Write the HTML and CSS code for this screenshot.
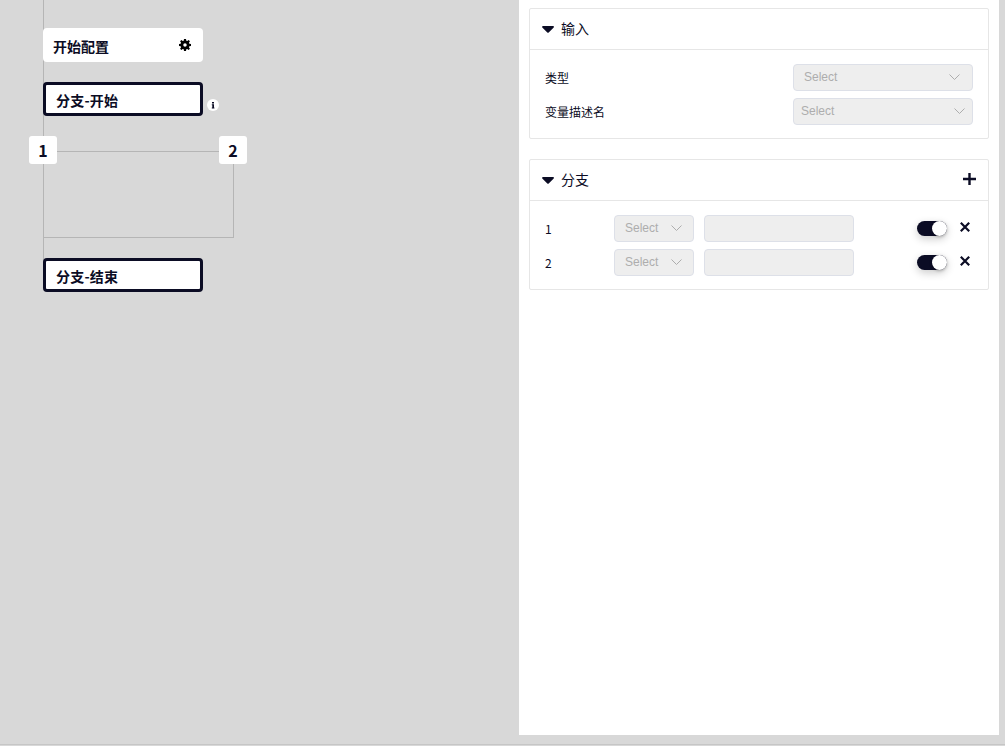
FILE: index.html
```html
<!DOCTYPE html>
<html lang="zh-CN">
<head>
  <meta charset="UTF-8" />
  <title>分支配置</title>
  <link rel="stylesheet" href="styles.css">
</head>
<body>

<div class="page">
  <div class="canvas">
    <div class="line line-main"></div>
    <div class="branch-box"></div>

    <div class="node node-start">
      <span>开始配置</span>
      <svg class="gear" viewBox="0 0 24 24" width="12" height="12"><path fill-rule="evenodd" d="M10 0h4l.6 3.300 1.900.8 2.800-1.900 2.500 2.500-1.900 2.800.8 1.900 3.300.6v4l-3.300.6-.8 1.900 1.900 2.800-2.500 2.500-2.800-1.900-1.900.8L14 24h-4l-.6-3.300-1.900-.8-2.800 1.900-2.500-2.500 1.900-2.800-.8-1.900L0 14v-4l3.300-.6.8-1.900-1.900-2.800 2.500-2.500 2.800 1.900 1.900-.8zM12 8.500a3.500 3.500 0 1 0 0 7 3.500 3.500 0 0 0 0-7z"/></svg>
    </div>

    <div class="node node-branch node-open">分支-开始</div>
    <svg class="info" viewBox="0 0 12 12" width="12" height="12"><circle cx="6" cy="6" r="6" fill="#fff"/><path d="M5 3h2v1.500H5zM4.800 5.300H7v3.200h.4V9.500H4.800V8.500h.5V6.300h-.5z" fill="#0b0c24"/></svg>

    <div class="tag tag-left">1</div>
    <div class="tag tag-right">2</div>

    <div class="node node-branch node-close">分支-结束</div>
  </div>

  <div class="panel">
    <section class="card">
      <div class="card-head">
        <svg class="caret" viewBox="0 0 12 7" width="12" height="7"><path d="M1 0h10c.8 0 1.200.9.700 1.500L6.700 6.400c-.4.4-1 .4-1.400 0L.3 1.500C-.2.900.2 0 1 0z" fill="#0b0c24"/></svg>
        <h2>输入</h2>
      </div>
      <div class="card-body">
        <div class="field">
          <label>类型</label>
          <div class="select select-wide select-first"><span>Select</span><svg class="chev" viewBox="0 0 11 6" width="11" height="6"><path d="M.5.5 5.500 5.500 10.500.5" fill="none" stroke="#adadad"/></svg></div>
        </div>
        <div class="field">
          <label>变量描述名</label>
          <div class="select select-wide"><span>Select</span><svg class="chev" viewBox="0 0 11 6" width="11" height="6"><path d="M.5.5 5.500 5.500 10.500.5" fill="none" stroke="#adadad"/></svg></div>
        </div>
      </div>
    </section>

    <section class="card">
      <div class="card-head">
        <svg class="caret" viewBox="0 0 12 7" width="12" height="7"><path d="M1 0h10c.8 0 1.200.9.700 1.500L6.700 6.400c-.4.4-1 .4-1.400 0L.3 1.500C-.2.900.2 0 1 0z" fill="#0b0c24"/></svg>
        <h2>分支</h2>
        <svg class="plus" viewBox="0 0 13 12" width="13" height="12"><path d="M6.500 0v12M0 6h13" stroke="#0b0c24" stroke-width="2.400"/></svg>
      </div>
      <div class="card-body">
        <div class="branch-row">
          <span class="branch-num">1</span>
          <div class="select select-small"><span>Select</span><svg class="chev" viewBox="0 0 11 6" width="11" height="6"><path d="M.5.5 5.500 5.500 10.500.5" fill="none" stroke="#adadad"/></svg></div>
          <div class="text-input"></div>
          <div class="switch"><i></i></div>
          <svg class="close" viewBox="0 0 10 10" width="10" height="10"><path d="M.8.8l8.400 8.400M9.200.8L.8 9.200" stroke="#0b0c24" stroke-width="2.200"/></svg>
        </div>
        <div class="branch-row">
          <span class="branch-num">2</span>
          <div class="select select-small"><span>Select</span><svg class="chev" viewBox="0 0 11 6" width="11" height="6"><path d="M.5.5 5.500 5.500 10.500.5" fill="none" stroke="#adadad"/></svg></div>
          <div class="text-input"></div>
          <div class="switch"><i></i></div>
          <svg class="close" viewBox="0 0 10 10" width="10" height="10"><path d="M.8.8l8.400 8.400M9.200.8L.8 9.200" stroke="#0b0c24" stroke-width="2.200"/></svg>
        </div>
      </div>
    </section>
  </div>
</div>

</body>
</html>
```

FILE: styles.css
```css
* { box-sizing: border-box; }
html, body { height: 100%; }
body { margin: 0; background: #d8d8d8; color: #0b0c24; font-family: "Noto Sans CJK SC", "Noto Sans", sans-serif; overflow: hidden; }
.page { display: flex; height: 745px; border-bottom: 1px solid #c6c6c6; }

/* diagram canvas */
.canvas { position: relative; flex: 0 0 519px; }
.line-main { position: absolute; left: 43px; top: 0; width: 1px; height: 260px; background: #b5b5b5; }
.branch-box { position: absolute; left: 43px; top: 151px; width: 191px; height: 87px; border: 1px solid #b5b5b5; border-left: 0; }
.node { position: absolute; left: 43px; width: 160px; height: 34px; background: #fff; border-radius: 4px; font-size: 14px; font-weight: 700; }
.node-start { top: 28px; display: flex; justify-content: space-between; padding: 9px 12px 0 10px; line-height: 19px; }
.gear { margin-top: 2px; }
.node-branch { border: 3px solid #0b0c24; padding-left: 10px; line-height: 30px; letter-spacing: 0.2px; }
.node-open { top: 82px; }
.node-close { top: 258px; }
.info { position: absolute; left: 207px; top: 99px; }
.tag { position: absolute; top: 136px; width: 28px; height: 28px; background: #fff; border-radius: 3px; font-size: 16px; font-weight: 700; line-height: 28px; text-align: center; }
.tag-left { left: 29px; }
.tag-right { left: 219px; }

/* settings panel */
.panel { flex: 0 0 480px; height: 735px; background: #fff; padding: 8px 10px; }
.card { border: 1px solid #e6e6e6; border-radius: 2px; margin-bottom: 20px; height: 131px; }
.card-head { display: flex; align-items: center; height: 41px; padding: 0 12px 2px; border-bottom: 1px solid #e6e6e6; }
.card-head h2 { margin: 0; font-size: 14px; font-weight: 400; }
.caret { margin-right: 7px; margin-top: 2px; }
.plus { margin-left: auto; }
.card-body { padding: 14px 15px 0; }

.field { display: flex; justify-content: space-between; align-items: center; height: 27px; margin-bottom: 7px; }
.field label { font-size: 12px; }

.select { display: flex; align-items: center; justify-content: space-between; height: 27px; background: #eee; border: 1px solid #dde0e8; border-radius: 4px; color: #adadad; font-family: "Liberation Sans", sans-serif; font-size: 12px; padding-bottom: 2px; }
.select-wide { width: 180px; padding-left: 7px; padding-right: 7px; }
.select-first { padding-left: 10px; padding-right: 12px; }
.select-small { width: 80px; padding-left: 10px; padding-right: 11px; }

.branch-row { display: flex; align-items: center; height: 27px; margin-bottom: 7px; }
.branch-num { width: 69px; font-size: 12px; }
.text-input { width: 150px; height: 27px; margin-left: 10px; background: #eee; border: 1px solid #dde0e8; border-radius: 4px; }
.switch { position: relative; width: 30px; height: 15px; margin-left: 63px; background: #0b0c24; border-radius: 8px; box-shadow: 0 3px 8px rgba(0,0,0,0.2); }
.switch i { position: absolute; right: 0; top: 0; width: 15px; height: 15px; background: #fff; border-radius: 50%; box-shadow: 0 1px 3px rgba(0,0,0,0.25); }
.close { margin-left: 13px; margin-top: -3px; }
```
